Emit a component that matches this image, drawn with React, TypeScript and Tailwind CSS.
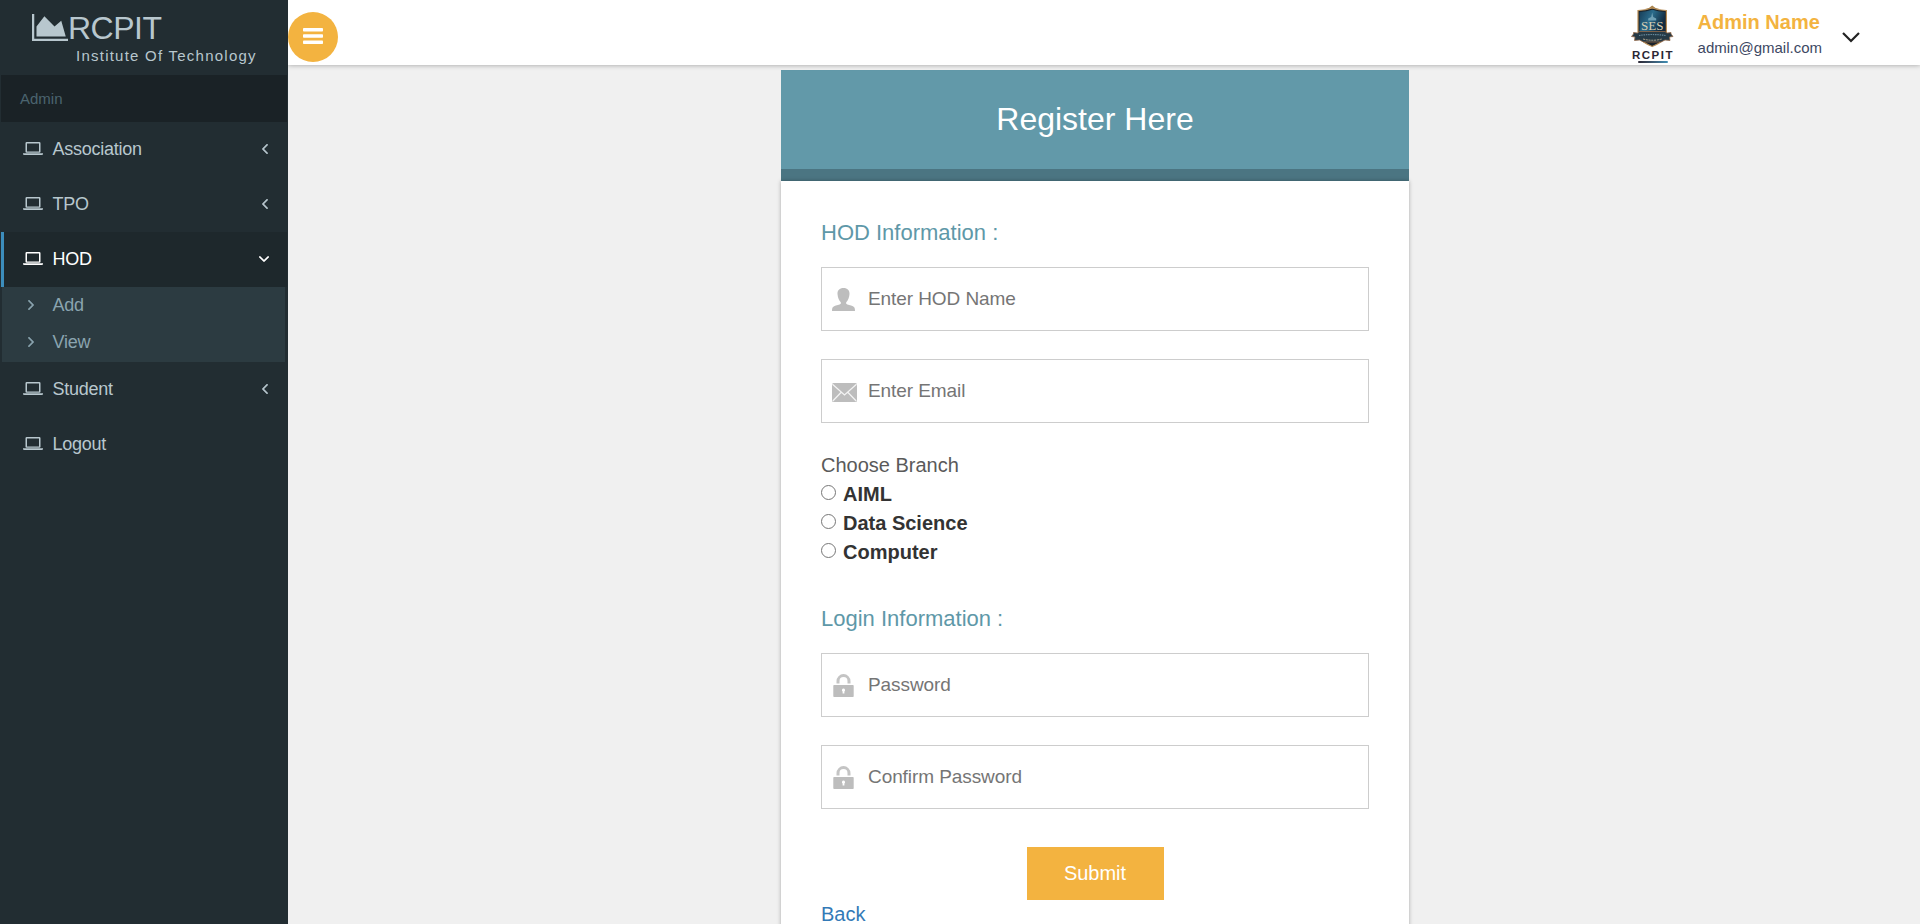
import React from "react";

type IconProps = { className?: string };

function AreaChartIcon({ className }: IconProps) {
  return (
    <svg viewBox="0 128 2048 1536" className={className} fill="currentColor">
      <path d="M2048 1536v128h-2048v-1536h128v1408h1920zM1664 512l256 896h-1664v-576l448-576 576 576z" />
    </svg>
  );
}

function LaptopIcon({ className }: IconProps) {
  return (
    <svg viewBox="0 0 20 13" className={className} fill="currentColor">
      <path fillRule="evenodd" d="M3.700 0h12.600q1.200 0 1.200 1.200v8.600q0 .9-1 .9h-13q-1 0-1-.9V1.200Q2.500 0 3.700 0zM4 1.400v8h12v-8z" />
      <path d="M0 11.200h20v.7q0 1.100-1.300 1.100H1.300Q0 13 0 11.900z" />
    </svg>
  );
}

function AngleIcon({ className }: IconProps) {
  return (
    <svg viewBox="45 461 582 998" className={className} fill="currentColor" stroke="currentColor" strokeWidth="40">
      <path d="M627 544q0 13-10 23l-393 393 393 393q10 10 10 23t-10 23l-50 50q-10 10-23 10t-23-10l-466-466q-10-10-10-23t10-23l466-466q10-10 23-10t23 10l50 50q10 10 10 23z" />
    </svg>
  );
}

function UserIcon() {
  return (
    <svg width="23" height="23" viewBox="0 0 23 23" fill="#bdbdbd">
      <path d="M11.500 0C7.500 0 5.300 2.400 5.500 6c.2 3.600 1.500 6.400 3.300 8.200v1.600c-1 1-4.600 1.300-6.700 2.400C.5 19 0 20 0 23h23c0-3-.5-4-2.100-4.800-2.100-1.100-5.700-1.400-6.700-2.400v-1.600c1.800-1.800 3.100-4.600 3.300-8.200.2-3.600-2-6-6-6z" />
    </svg>
  );
}

function MailIcon() {
  return (
    <svg width="25" height="19" viewBox="0 0 25 19">
      <rect width="25" height="19" rx="1.500" fill="#bdbdbd" />
      <path d="M.5 1.300 12.500 12 24.500 1.300M.8 18 9 9.500M24.200 18 16 9.500" fill="none" stroke="#f4f4f4" strokeWidth="1.200" />
    </svg>
  );
}

function LockIcon() {
  return (
    <svg width="21" height="23" viewBox="0 0 21 23">
      <path d="M5 9.500V7.200a5.500 5.700 0 0 1 11 0V9.500" fill="none" stroke="#c4c4c4" strokeWidth="3" />
      <rect x=".3" y="11" width="20.400" height="12" rx=".8" fill="#bdbdbd" />
      <path d="M10.500 14.500a1.600 1.600 0 0 1 .9 2.900V19.500h-1.800V17.400a1.600 1.600 0 0 1 .9-2.900z" fill="#fff" />
    </svg>
  );
}

function CrestLogo() {
  return (
    <svg width="48" height="60" viewBox="0 0 48 60" fontFamily="Liberation Sans, sans-serif">
      <defs>
        <linearGradient id="shield" x1="0" x2="1" y1="0" y2="0.4">
          <stop offset="0" stopColor="#173c56" />
          <stop offset="0.5" stopColor="#2b6c8c" />
          <stop offset="1" stopColor="#122b40" />
        </linearGradient>
      </defs>
      <path d="M17 9c3-.3 5-1.500 7.200-3.500C26.500 7.500 28.500 8.700 31.500 9l-7.300 1z" fill="#a8824c" />
      <path d="M10 10.500q8-.2 14.200-2.500 6.200 2.300 14.200 2.500V32c0 6-5 11-14.200 14.500C15 43 10 38 10 32z" fill="#1a222a" stroke="#b98f58" strokeWidth="1.200" />
      <path d="M11.500 12q7-.3 12.700-2.300Q30 11.700 37 12V32H11.500z" fill="url(#shield)" />
      <path d="M24.200 12.500l1 4.500 3 1.500v2h-8v-2l3-1.500z" fill="#6fa0b5" />
      <text x="13" y="30" fontSize="12.500" fontFamily="Liberation Serif, serif" fill="#d8cfb4" textLength="22.500" lengthAdjust="spacingAndGlyphs">SES</text>
      <path d="M3.500 36.500l2-2.500V32.500l4 .5 2-1.500h25.500l2 1.500 4-.5V34l2 2.500-3.500.5.500 3.500-5-.5-4 2H15.500l-4-2-5 .5.500-3.500z" fill="#263a46" stroke="#94694a" strokeWidth=".8" />
      <path d="M11 35.500q13-2 26.500 0" stroke="#67889a" strokeWidth="1.200" strokeDasharray="1.500 .8" fill="none" />
      <path d="M15 39q9.500 2.500 19 0" stroke="#b3a78e" strokeWidth="1" strokeDasharray="2 .8" fill="none" />
      <text x="4" y="58.800" fontSize="11.500" fontWeight="700" fill="#2b2734" textLength="40.500" lengthAdjust="spacing">RCPIT</text>
    </svg>
  );
}

type NavItem = { label: string; arrow?: boolean };

function NavRow({ label, arrow }: NavItem) {
  return (
    <a className="flex h-[55px] items-center pr-5 pb-[2px] pl-[22.500px] text-[#b8c7ce]">
      <LaptopIcon className="h-[13px] w-5" />
      <span className="ml-[10px] flex-1 pt-[2px] text-[18px] tracking-[-0.25px]">{label}</span>
      {arrow && <AngleIcon className="h-[10px] w-[6px]" />}
    </a>
  );
}

function SubRow({ label }: { label: string }) {
  return (
    <a className="flex h-[37px] items-center pb-px pl-[25.500px] text-[#8aa4af]">
      <AngleIcon className="h-[10px] w-[6px] rotate-180" />
      <span className="ml-[19px] text-[18px] tracking-[-0.2px]">{label}</span>
    </a>
  );
}

function Sidebar() {
  return (
    <aside className="flex h-full w-[288px] shrink-0 flex-col bg-[#222d32]">
      <div className="h-[75px] text-[#b8c7ce]">
        <div className="flex h-[46px] items-end pl-8">
          <AreaChartIcon className="mb-[5px] h-[27px] w-9" />
          <span className="text-[32px] leading-[36px] tracking-[-0.5px]">RCPIT</span>
        </div>
        <div className="pl-[76px] text-[15px] leading-[20px] tracking-[1.240px]">Institute Of Technology</div>
      </div>
      <div className="mx-px h-[47px] bg-[#1a2226] pl-[19px] text-[15px] leading-[47px] text-[#4b646f]">Admin</div>
      <nav className="flex flex-col">
        <NavRow label="Association" arrow />
        <NavRow label="TPO" arrow />
        <a className="mx-px flex h-[55px] items-center border-l-[3px] border-[#3c8dbc] bg-[#1e282c] pr-5 pb-[2px] pl-[18.500px] text-white">
          <LaptopIcon className="h-[13px] w-5" />
          <span className="ml-[10px] flex-1 pt-[2px] text-[18px] tracking-[-0.25px]">HOD</span>
          <AngleIcon className="h-[10px] w-[6px] -rotate-90" />
        </a>
        <div className="mr-[3px] ml-[2px] h-[75px] bg-[#2c3b41]">
          <SubRow label="Add" />
          <SubRow label="View" />
        </div>
        <NavRow label="Student" arrow />
        <NavRow label="Logout" />
      </nav>
    </aside>
  );
}

function TopBar() {
  return (
    <header className="z-10 flex h-[65px] shrink-0 items-start bg-white shadow-[0_0_5px_rgba(0,0,0,0.35)] [clip-path:inset(0_0_-10px_0)]">
      <button className="mt-3 flex h-[50px] w-[50px] items-center justify-center rounded-full bg-[#f3b340]">
        <svg width="20" height="16" viewBox="0 0 20 16" fill="#fff" className="mb-[2px]">
          <rect width="20" height="3.500" rx=".8" />
          <rect y="6.300" width="20" height="3.500" rx=".8" />
          <rect y="12.500" width="20" height="3.500" rx=".8" />
        </svg>
      </button>
      <div className="mr-[60px] ml-auto flex items-start">
        <div className="flex flex-col">
          <CrestLogo />
          <div className="mt-px ml-2.5 h-[2px] w-[30px] rounded-full bg-linear-to-r from-[#2b2734] to-[#3f8fb5]" />
        </div>
        <div className="ml-[22px] pt-[10px]">
          <div className="text-[20px] leading-[24px] font-bold text-[#f3b340]">Admin Name</div>
          <div className="mt-[3px] text-[15px] leading-[22px] text-[#3d4863]">admin@gmail.com</div>
        </div>
        <svg className="mt-[31px] ml-5" width="18" height="12" viewBox="0 0 18 12" fill="none" stroke="#222" strokeWidth="2.200">
          <path d="M1 2l8 8 8-8" />
        </svg>
      </div>
    </header>
  );
}

function Field({ icon, placeholder, type }: { icon: React.ReactNode; placeholder: string; type: string }) {
  return (
    <label className="flex h-16 items-center border border-[#cdcdcd] pl-[10px]">
      <span className="flex h-full w-[25px] items-center pt-px">{icon}</span>
      <input
        type={type}
        placeholder={placeholder}
        className="ml-[11px] h-full flex-1 pb-px text-[19px] tracking-[-0.08px] outline-none placeholder:text-[#757575]"
      />
    </label>
  );
}

function Branch({ label }: { label: string }) {
  return (
    <label className="flex h-[29px] items-center text-[20px] font-bold text-[#333]">
      <input type="radio" name="branch" className="mr-[7px] mb-[4px] h-[15px] w-[15px]" />
      <span className="pb-[2px]">{label}</span>
    </label>
  );
}

function RegisterForm() {
  return (
    <form className="ml-[493px] w-[628px]">
      <h1 className="mt-[5px] h-[111px] border-b-[12px] border-[#4b7582] bg-[#6299a9] text-center text-[32px] leading-[99px] text-white">
        Register Here
      </h1>
      <div className="h-[800px] bg-white px-10 pt-[37px] shadow-[0_0_4px_rgba(0,0,0,0.3)]">
        <h2 className="h-[49px] text-[22px] leading-[29px] text-[#5e98a8]">HOD Information :</h2>
        <Field icon={<UserIcon />} placeholder="Enter HOD Name" type="text" />
        <div className="h-7" />
        <Field icon={<span className="pt-[2px]"><MailIcon /></span>} placeholder="Enter Email" type="email" />
        <div className="mt-[27px] h-[30px] text-[20px] leading-[30px] text-[#5a5a5a]">Choose Branch</div>
        <Branch label="AIML" />
        <Branch label="Data Science" />
        <Branch label="Computer" />
        <h2 className="mt-[37px] h-[49px] text-[22px] leading-[29px] text-[#5e98a8]">Login Information :</h2>
        <Field icon={<span className="pl-px"><LockIcon /></span>} placeholder="Password" type="password" />
        <div className="h-7" />
        <Field icon={<span className="pl-px"><LockIcon /></span>} placeholder="Confirm Password" type="password" />
        <button type="button" className="mx-auto mt-[38px] block h-[53px] w-[137px] bg-[#f3b340] pb-[2px] text-[20px] text-white">
          Submit
        </button>
        <a className="block text-[20px] leading-[28px] text-[#337ab7]">Back</a>
      </div>
    </form>
  );
}

export default function App() {
  return (
    <div className="flex h-[924px] w-[1920px] overflow-hidden bg-[#f0f0f0] font-['Liberation_Sans',Arial,sans-serif]">
      <Sidebar />
      <div className="flex min-w-0 flex-1 flex-col">
        <TopBar />
        <main className="min-h-0 flex-1 overflow-hidden">
          <RegisterForm />
        </main>
      </div>
    </div>
  );
}
